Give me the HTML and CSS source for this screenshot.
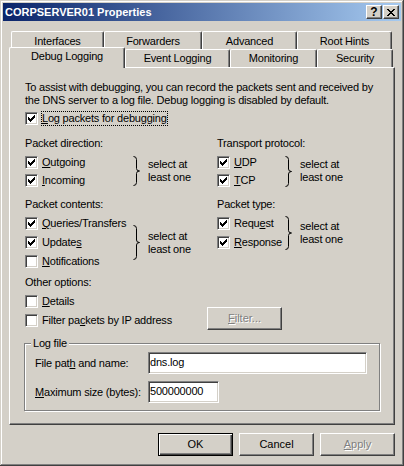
FILE: index.html
```html
<!DOCTYPE html>
<html lang="en">
  <head>
    <meta charset="UTF-8" />
    <title>CORPSERVER01 Properties</title>
    <link rel="stylesheet" href="styles.css">
  </head>
  <body>
    <div class="window">
      <!-- Title bar -->
      <div class="titlebar">
        <span class="title">CORPSERVER01 Properties</span>
        <div class="title-buttons">
          <span class="tbtn help">?</span>
          <span class="tbtn close">
            <svg width="8" height="7" viewBox="0 0 8 7" shape-rendering="crispEdges">
              <path d="M0 0h2v1H0zM6 0h2v1H6zM1 1h2v1H1zM5 1h2v1H5zM2 2h4v1H2zM3 3h2v1H3zM2 4h4v1H2zM1 5h2v1H1zM5 5h2v1H5zM0 6h2v1H0zM6 6h2v1H6z" fill="#000"/>
            </svg>
          </span>
        </div>
      </div>

      <!-- Tabs -->
      <div class="tabs">
        <div class="tab-row back">
          <div class="tab w-interfaces">Interfaces</div>
          <div class="tab w-forwarders">Forwarders</div>
          <div class="tab w-advanced">Advanced</div>
          <div class="tab w-roothints">Root Hints</div>
        </div>
        <div class="tab-row front">
          <div class="tab w-debug active">Debug Logging</div>
          <div class="tab w-event">Event Logging</div>
          <div class="tab w-monitoring">Monitoring</div>
          <div class="tab w-security">Security</div>
        </div>
      </div>

      <!-- Tab page -->
      <div class="panel">
        <p class="intro">
          To assist with debugging, you can record the packets sent and received by<br>
          the DNS server to a log file. Debug logging is disabled by default.
        </p>

        <div class="row">
          <span class="box checked"></span>
          <span class="label focus"><u>L</u>og packets for debugging</span>
        </div>

        <div class="groups">
          <div class="group">
            <div class="heading">Packet direction:</div>
            <div class="opts">
              <div class="list wide tight">
                <div class="row"><span class="box checked"></span><span class="label"><u>O</u>utgoing</span></div>
                <div class="row"><span class="box checked"></span><span class="label"><u>I</u>ncoming</span></div>
              </div>
              <svg class="brace" width="8" height="30" viewBox="0 0 8 30"><path d="M0.5 0.5Q3.5 0.5 3.5 3.5V12.5Q3.5 15 6.5 15Q3.5 15 3.5 17.5V26.5Q3.5 29.5 0.5 29.5"/></svg>
              <div class="hint">select at<br>least one</div>
            </div>
          </div>

          <div class="group">
            <div class="heading">Transport protocol:</div>
            <div class="opts">
              <div class="list narrow tight">
                <div class="row"><span class="box checked"></span><span class="label"><u>U</u>DP</span></div>
                <div class="row"><span class="box checked"></span><span class="label"><u>T</u>CP</span></div>
              </div>
              <svg class="brace" width="8" height="31" viewBox="0 0 8 31"><path d="M0.5 0.5Q3.5 0.5 3.5 3.5V13Q3.5 15.5 6.5 15.5Q3.5 15.5 3.5 18V27.5Q3.5 30.5 0.5 30.5"/></svg>
              <div class="hint">select at<br>least one</div>
            </div>
          </div>

          <div class="group">
            <div class="heading">Packet contents:</div>
            <div class="opts">
              <div class="list wide">
                <div class="row"><span class="box checked"></span><span class="label"><u>Q</u>ueries/Transfers</span></div>
                <div class="row"><span class="box checked"></span><span class="label">Update<u>s</u></span></div>
                <div class="row"><span class="box"></span><span class="label"><u>N</u>otifications</span></div>
              </div>
              <svg class="brace" width="8" height="35" viewBox="0 0 8 35"><path d="M0.5 0.5Q3.5 0.5 3.5 3.5V15Q3.5 17.5 6.5 17.5Q3.5 17.5 3.5 20V31.5Q3.5 34.5 0.5 34.5"/></svg>
              <div class="hint">select at<br>least one</div>
            </div>
          </div>

          <div class="group">
            <div class="heading">Packet type:</div>
            <div class="opts">
              <div class="list narrow">
                <div class="row"><span class="box checked"></span><span class="label">Requ<u>e</u>st</span></div>
                <div class="row"><span class="box checked"></span><span class="label"><u>R</u>esponse</span></div>
              </div>
              <svg class="brace" width="8" height="34" viewBox="0 0 8 34"><path d="M0.5 0.5Q3.5 0.5 3.5 3.5V14.5Q3.5 17 6.5 17Q3.5 17 3.5 19.5V30.5Q3.5 33.5 0.5 33.5"/></svg>
              <div class="hint">select at<br>least one</div>
            </div>
          </div>
        </div>

        <div class="other">
          <div class="heading">Other options:</div>
          <div class="other-body">
            <div class="list filter-list">
              <div class="row"><span class="box"></span><span class="label"><u>D</u>etails</span></div>
              <div class="row"><span class="box"></span><span class="label">Filter pa<u>c</u>kets by IP address</span></div>
            </div>
            <button class="btn disabled"><u>F</u>ilter...</button>
          </div>
        </div>

        <fieldset class="logfile">
          <legend>Log file</legend>
          <div class="fields">
            <label class="field-label">File pat<u>h</u> and name:</label>
            <div class="edit long">dns.log</div>
            <label class="field-label"><u>M</u>aximum size (bytes):</label>
            <div class="edit short">500000000</div>
          </div>
        </fieldset>
      </div>

      <!-- Dialog buttons -->
      <div class="actions">
        <button class="btn default">OK</button>
        <button class="btn">Cancel</button>
        <button class="btn disabled"><u>A</u>pply</button>
      </div>
    </div>
  </body>
</html>
```

FILE: styles.css
```css
/* Global */
body {
  margin: 0;
  font-family: "Liberation Sans", Arial, sans-serif;
  font-size: 11px;
  line-height: 13px;
  letter-spacing: -0.2px;
  color: #000;
  background: #d4d0c8;
}

u {
  text-decoration: underline;
  text-underline-offset: 1px;
}

/* Window frame */
.window {
  width: 404px;
  height: 466px;
  box-sizing: border-box;
  padding: 3px;
  background: #d4d0c8;
  box-shadow: inset -1px -1px #404040, inset 1px 1px #d4d0c8,
    inset -2px -2px #808080, inset 2px 2px #fff;
  display: flex;
  flex-direction: column;
}

.titlebar {
  height: 18px;
  display: flex;
  align-items: center;
  justify-content: space-between;
  padding: 0 2px;
  background: linear-gradient(to right, #0a246a, #a6caf0);
}

.title {
  color: #fff;
  font-weight: bold;
  line-height: 18px;
  letter-spacing: 0;
}

.title-buttons {
  display: flex;
  gap: 1px;
}

.tbtn {
  width: 16px;
  height: 14px;
  box-sizing: border-box;
  display: flex;
  align-items: center;
  justify-content: center;
  background: #d4d0c8;
  border: 1px solid;
  border-color: #fff #404040 #404040 #fff;
  box-shadow: inset -1px -1px #808080;
}

.tbtn.help {
  font-weight: bold;
  font-size: 12px;
  line-height: 12px;
  letter-spacing: 0;
}

/* Tabs */
.tabs {
  margin: 10px 6px 0;
}

.tab-row {
  display: flex;
  height: 18px;
  padding-left: 2px;
}

.tab {
  box-sizing: border-box;
  height: 18px;
  text-align: center;
  white-space: nowrap;
  background: #d4d0c8;
  border-top: 1px solid #fff;
  border-left: 1px solid #fff;
  border-right: 1px solid #404040;
  border-radius: 2px 2px 0 0;
  box-shadow: inset -1px 0 #808080;
}

.back .tab {
  padding-top: 3px;
}

.front .tab {
  padding-top: 2px;
}

.tab.active {
  position: relative;
  z-index: 1;
  height: 21px;
  margin-top: -2px;
  margin-left: -2px;
}

.w-interfaces { width: 93px; }
.w-forwarders { width: 98px; }
.w-advanced { width: 95px; }
.w-roothints { width: 95px; }
.w-debug { width: 116px; }
.w-event { width: 105px; }
.w-monitoring { width: 87px; }
.w-security { width: 76px; }

/* Tab page */
.panel {
  margin: 0 6px;
  height: 358px;
  box-sizing: border-box;
  padding: 13px 14px 0 15px;
  border-top: 1px solid #fff;
  border-left: 1px solid #fff;
  border-right: 1px solid #404040;
  border-bottom: 1px solid #404040;
  box-shadow: inset -1px -1px #808080;
}

.intro {
  margin: 0;
  white-space: nowrap;
}

.row {
  display: flex;
  align-items: center;
  height: 19px;
}

.tight .row {
  height: 18px;
}

.panel > .row {
  margin-top: 2px;
}

/* Checkbox */
.box {
  flex: none;
  width: 13px;
  height: 13px;
  box-sizing: border-box;
  background: #fff;
  border: 1px solid;
  border-color: #808080 #fff #fff #808080;
  box-shadow: inset 1px 1px #404040, inset -1px -1px #d4d0c8;
}

.box.checked {
  background: #fff url("data:image/svg+xml,%3Csvg xmlns='http://www.w3.org/2000/svg' width='7' height='7' shape-rendering='crispEdges'%3E%3Cpath d='M6 0h1v1H6zM5 1h2v1H5zM0 2h1v1H0zM4 2h3v1H4zM0 3h2v1H0zM3 3h3v1H3zM0 4h5v1H0zM1 5h3v1H1zM2 6h1v1H2z'/%3E%3C/svg%3E") no-repeat 2px 2px;
}

.label {
  margin-left: 4px;
  white-space: nowrap;
}

.label.focus {
  margin-left: 3px;
  border: 1px dotted #000;
}

/* Option groups */
.groups {
  margin-top: 9px;
  display: grid;
  grid-template-columns: 192px 1fr;
  row-gap: 9px;
}

.heading {
  margin-bottom: 3px;
}

.opts {
  display: flex;
  align-items: center;
}

.list.wide {
  width: 108px;
}

.list.narrow {
  width: 68px;
}

.brace {
  flex: none;
  fill: none;
  stroke: #000;
  stroke-width: 1;
}

.hint {
  margin-left: 7px;
}

.other {
  margin-top: 5px;
}

.other-body {
  display: flex;
  align-items: flex-end;
}

.filter-list {
  width: 182px;
}

/* Buttons */
.btn {
  width: 75px;
  height: 23px;
  padding: 0;
  font: inherit;
  color: #000;
  background: #d4d0c8;
  border: 1px solid;
  border-color: #fff #404040 #404040 #fff;
  box-shadow: inset -1px -1px #808080;
}

.btn.default {
  border-color: #000;
  box-shadow: inset 1px 1px #fff, inset -1px -1px #404040,
    inset -2px -2px #808080;
}

.btn.disabled {
  color: #808080;
  text-shadow: 1px 1px #fff;
}

/* Log file group */
.logfile {
  margin: 7px 0 0 -1px;
  width: 356px;
  box-sizing: border-box;
  padding: 2px 0 7px 10px;
  border: 1px solid #808080;
  box-shadow: 1px 1px 0 #fff, inset 1px 1px 0 #fff;
}

.logfile legend {
  margin-left: -4px;
  padding: 0 2px;
  background: #d4d0c8;
}

.fields {
  display: grid;
  grid-template-columns: 113px auto;
  row-gap: 7px;
  align-items: center;
}

.edit {
  height: 22px;
  box-sizing: border-box;
  padding: 3px 1px 0;
  background: #fff;
  border: 1px solid;
  border-color: #808080 #fff #fff #808080;
  box-shadow: inset 1px 1px #404040, inset -1px -1px #d4d0c8;
}

.edit.long {
  width: 219px;
}

.edit.short {
  width: 71px;
}

.actions {
  margin: 8px 6px 0;
  display: flex;
  justify-content: flex-end;
  gap: 6px;
}
```
